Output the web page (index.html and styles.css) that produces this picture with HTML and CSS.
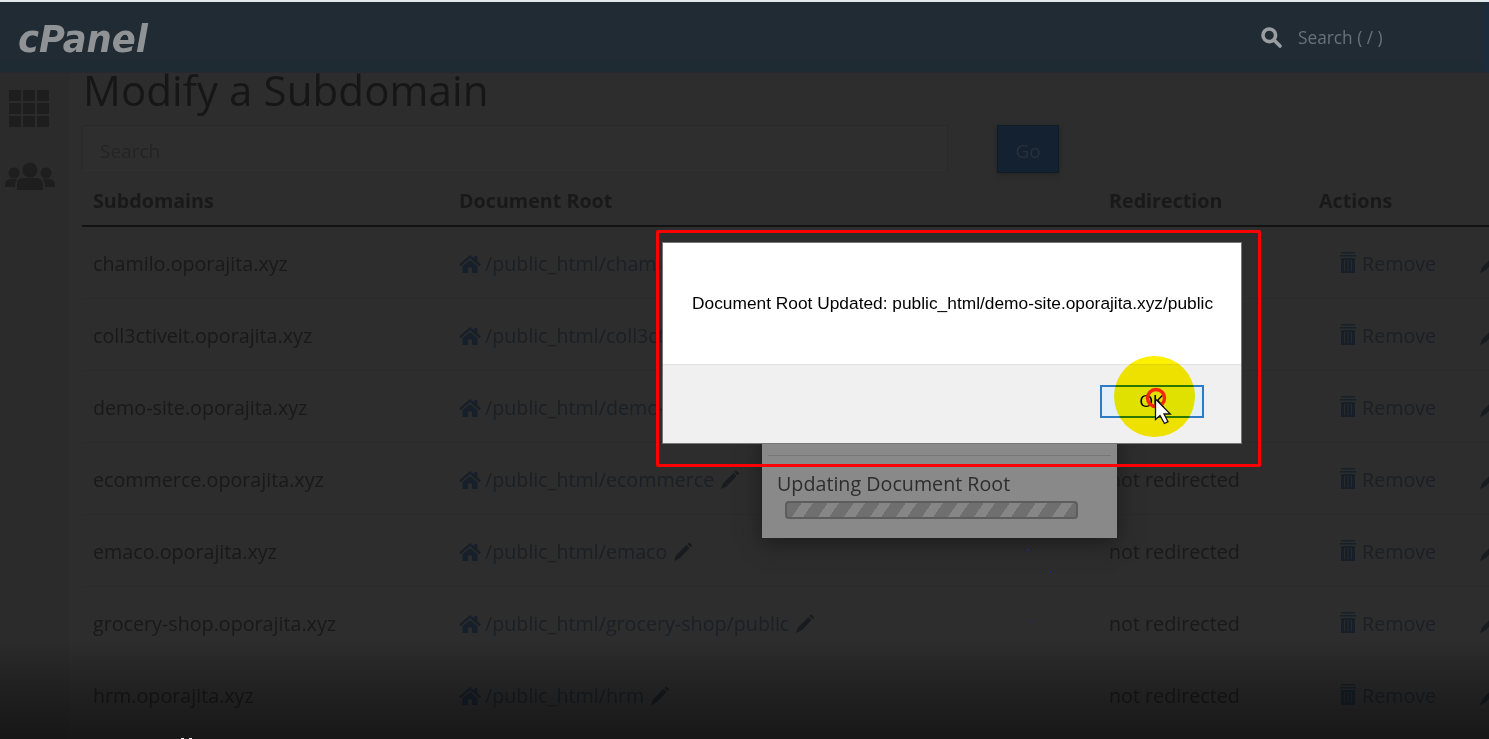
FILE: index.html
```
<!DOCTYPE html>
<html lang="en">
<head>
<meta charset="utf-8">
<title>cPanel - Modify a Subdomain</title>
<link rel="stylesheet" href="styles.css">
</head>
<body>
<svg width="0" height="0" class="defs">
  <symbol id="home" viewBox="0 0 22 20"><path d="M11 1 0 10.5l1.6 1.7L11 4.2l9.4 8 1.6-1.7-3.600-3.200V2h-3v2.600zM11 6l-7.500 6.300V19H9v-5.500h4V19h5.500v-6.700z"/></symbol>
  <symbol id="pencil" viewBox="0 0 20 20"><path d="M1 19l2-5.500L13.500 3l3 3L6.500 16.500zM14.500 2l1.500-1.500L19.500 3.500 17.500 5z"/></symbol>
  <symbol id="trash" viewBox="0 0 16 22"><path d="M1 1h14v1.600H1zM0 4h16v1.600H0zM1 7h14v15H1z"/><path class="slits" d="M4.500 9v11M8 9v11M11.500 9v11"/></symbol>
</svg>
<header class="topbar">
  <svg class="logo" width="140" height="44" viewBox="0 0 140 44"><text x="2" y="36" textLength="130" lengthAdjust="spacingAndGlyphs">cPanel</text></svg>
  <div class="topsearch">
    <svg width="21" height="21" viewBox="0 0 21 21"><circle cx="8.300" cy="8.300" r="6.300"/><path d="M13 13l6 6"/></svg>
    <span>Search ( / )</span>
  </div>
  <div class="topedge"></div>
</header>
<div class="shell">
  <nav class="side">
    <svg width="40" height="37" viewBox="0 0 40 37"><path d="M0 0h12v11H0zM14 0h12v11H14zM28 0h12v11H28zM0 13h12v11H0zM14 13h12v11H14zM28 13h12v11H28zM0 26h12v11H0zM14 26h12v11H14zM28 26h12v11H28z"/></svg>
    <svg width="50" height="30" viewBox="0 0 50 30"><circle cx="25" cy="8" r="7.500"/><circle cx="9" cy="11" r="5.500"/><circle cx="41" cy="11" r="5.500"/><path d="M12 28v-5q0-7 7-7h12q7 0 7 7v5zM0 25v-2q0-6 6-6h6q-2 3-2 8zM50 25v-2q0-6-6-6h-6q2 3 2 8z"/></svg>
  </nav>
  <main class="content">
    <h1>Modify a Subdomain</h1>
    <div class="filter"><div class="field">Search</div><div class="go">Go</div></div>
    <div class="row head"><span>Subdomains</span><span>Document Root</span><span>Redirection</span><span>Actions</span></div>
    <div class="row"><span>chamilo.oporajita.xyz</span><span class="link"><svg class="home"><use href="#home"/></svg>/public_html/chamilo <svg class="pen"><use href="#pencil"/></svg></span><span>not redirected</span><span class="link act"><svg class="bin"><use href="#trash"/></svg>Remove<svg class="pen"><use href="#pencil"/></svg></span></div>
    <div class="row"><span>coll3ctiveit.oporajita.xyz</span><span class="link"><svg class="home"><use href="#home"/></svg>/public_html/coll3ctiveit <svg class="pen"><use href="#pencil"/></svg></span><span>not redirected</span><span class="link act"><svg class="bin"><use href="#trash"/></svg>Remove<svg class="pen"><use href="#pencil"/></svg></span></div>
    <div class="row"><span>demo-site.oporajita.xyz</span><span class="link"><svg class="home"><use href="#home"/></svg>/public_html/demo-site <svg class="pen"><use href="#pencil"/></svg></span><span>not redirected</span><span class="link act"><svg class="bin"><use href="#trash"/></svg>Remove<svg class="pen"><use href="#pencil"/></svg></span></div>
    <div class="row"><span>ecommerce.oporajita.xyz</span><span class="link"><svg class="home"><use href="#home"/></svg>/public_html/ecommerce <svg class="pen"><use href="#pencil"/></svg></span><span>not redirected</span><span class="link act"><svg class="bin"><use href="#trash"/></svg>Remove<svg class="pen"><use href="#pencil"/></svg></span></div>
    <div class="row"><span>emaco.oporajita.xyz</span><span class="link"><svg class="home"><use href="#home"/></svg>/public_html/emaco <svg class="pen"><use href="#pencil"/></svg></span><span>not redirected</span><span class="link act"><svg class="bin"><use href="#trash"/></svg>Remove<svg class="pen"><use href="#pencil"/></svg></span></div>
    <div class="row"><span>grocery-shop.oporajita.xyz</span><span class="link"><svg class="home"><use href="#home"/></svg>/public_html/grocery-shop/public <svg class="pen"><use href="#pencil"/></svg></span><span>not redirected</span><span class="link act"><svg class="bin"><use href="#trash"/></svg>Remove<svg class="pen"><use href="#pencil"/></svg></span></div>
    <div class="row"><span>hrm.oporajita.xyz</span><span class="link"><svg class="home"><use href="#home"/></svg>/public_html/hrm <svg class="pen"><use href="#pencil"/></svg></span><span>not redirected</span><span class="link act"><svg class="bin"><use href="#trash"/></svg>Remove<svg class="pen"><use href="#pencil"/></svg></span></div>
  </main>
</div>
<div class="fade"></div>
<div class="ticks"></div>
<section class="progress">
  <div class="rule"></div>
  <p>Updating Document Root</p>
  <div class="bar"></div>
</section>
<section class="alert">
  <div class="message"><span>Document Root Updated: public_html/demo-site.oporajita.xyz/public</span></div>
  <div class="buttons"><div class="ok">OK</div></div>
</section>
<div class="frame"></div>
<div class="halo"></div>
<svg class="pointer" width="40" height="44" viewBox="0 0 40 44"><circle cx="16" cy="12" r="8.500"/><path d="M15.500 13v20.500l4.500-4 4.500 8 3.500-1.800-4-7.700h6.300z"/></svg>
<i class="spark s1"></i><i class="spark s2"></i><i class="spark s3"></i>
</body>
</html>
```
FILE: styles.css
```
* { box-sizing: border-box; }
body { position: relative; margin: 0; width: 1489px; height: 739px; overflow: hidden; background: #2d2d2d; font: 19.7px/28px "Open Sans", "Noto Sans", sans-serif; color: #191919; }
.defs { position: absolute; }
.topbar { display: flex; align-items: center; height: 73px; border-top: 2px solid #e3e8ea; background: linear-gradient(#212b34 0 57px, #1f2b33 60px 69px, #29292b 71px); padding-left: 16px; }
.logo text { font: italic 700 37px "DejaVu Sans", sans-serif; fill: #909396; }
.topsearch { display: flex; align-items: center; gap: 16px; margin-left: 1105px; width: 222px; color: #69727a; font-size: 17.3px; white-space: nowrap; }
.topsearch svg { fill: none; stroke: #9a9ea2; stroke-width: 3.6; stroke-linecap: round; }
.topedge { width: 6px; height: 71px; background: #1c2c3b; }
.shell { display: flex; height: 666px; }
.side { width: 69px; background: #2b2b2b; padding: 17px 0 0 5px; display: flex; flex-direction: column; gap: 35px; fill: #1e1e1e; }
.side svg:first-child { margin-left: 4px; }
.content { flex: 1; padding-left: 13px; min-width: 0; }
h1 { margin: -10px 0 0 1px; height: 62px; font-size: 42px; line-height: 54px; font-weight: 400; color: #161616; letter-spacing: .1px; }
.filter { display: flex; gap: 49px; height: 48px; }
.field { width: 866px; height: 46px; border: 1px solid #292929; background: #2e2e2e; padding: 11px 17px; line-height: 28px; font-size: 19px; color: #242424; border-bottom-color: #303030; }
.go { width: 62px; height: 48px; background: #142130; border: 1px solid #101b28; text-align: center; line-height: 50px; color: #26313c; font-size: 19px; box-shadow: 0 2px 4px #252525; }
.row { display: grid; grid-template-columns: 366px 650px 210px 200px; align-items: center; height: 72px; padding: 2px 0 0 11px; white-space: nowrap; border-bottom: 1px solid #2a2a2a; }
.head { height: 54px; padding-top: 3px; border-bottom: 2px solid #121212; font-weight: 700; }
.link { display: flex; align-items: center; color: #1b2025; }
.link svg { fill: #17202a; }
.home { width: 22px; height: 20px; margin-right: 4px; }
.link .pen { width: 20px; height: 20px; margin-left: 6px; fill: #191b1e; }
.bin { width: 16px; height: 22px; margin: 0 6px 4px 21px; }
.act .pen { margin-left: 43px; }
.slits { stroke: #292929; stroke-width: 1; }
.fade { position: absolute; inset: 640px 0 0; background: linear-gradient(transparent, rgba(0,0,0,.22) 40%, rgba(0,0,0,.48)); }
.ticks { position: absolute; left: 181px; top: 738px; width: 11px; height: 1px; background: linear-gradient(90deg, #eee 3px, transparent 3px 8px, #eee 8px); }
.progress { position: absolute; left: 762px; top: 430px; width: 355px; height: 108px; background: #898989; padding: 25px 6px 0; color: #2d2d2d; box-shadow: 0 5px 20px #1c1c1c; }
.rule { height: 1px; background: #777; }
.progress p { margin: 14px 0 0 9px; font-size: 19.7px; }
.bar { margin: 3px 0 0 17px; width: 293px; height: 18px; border: 2px solid #5d5d5d; border-radius: 4px; background: repeating-linear-gradient(125deg, #6f6f6f 0 12px, #868686 12px 21.3px); }
.alert { position: absolute; left: 662px; top: 242px; width: 580px; height: 202px; border: 1px solid #777; background: #fff; color: #000; font: 17.33px/22px "Liberation Sans", Arial, sans-serif; }
.message { height: 121px; padding: 49px 0 0 29px; white-space: nowrap; }
.buttons { height: 79px; border-top: 1px solid #e2e2e2; background: #f0f0f0; padding: 20px 37px 0; display: flex; justify-content: flex-end; }
.ok { width: 104px; height: 33px; border: 2px solid #2b7cc5; background: #e3effa; text-align: center; line-height: 28px; }
.frame { position: absolute; left: 656px; top: 230px; width: 605px; height: 237px; border: 3px solid #f00; border-radius: 2px; }
.halo { position: absolute; left: 1114px; top: 356px; width: 81px; height: 81px; border-radius: 50%; background: #fdf000; mix-blend-mode: multiply; }
.pointer { position: absolute; left: 1140px; top: 386px; }
.pointer circle { fill: none; stroke: #f5280c; stroke-width: 3.5; }
.pointer path { fill: #fff; stroke: #111; stroke-width: 1.300; }
.spark { position: absolute; width: 2px; height: 2px; background: #202878; }
.s1 { left: 1027px; top: 549px; }
.s2 { left: 1049px; top: 571px; }
.s3 { left: 1030px; top: 620px; }
```
